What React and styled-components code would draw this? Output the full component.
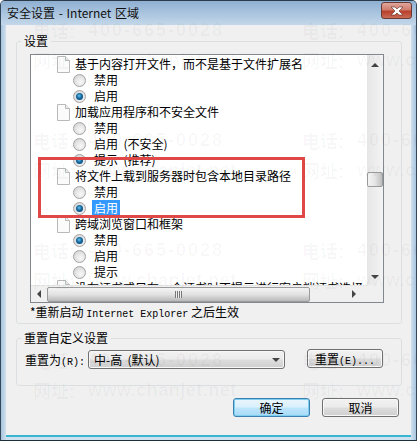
import React from "react";
import styled, { createGlobalStyle } from "styled-components";

const GlobalStyle = createGlobalStyle`
  html, body {
    margin: 0;
    padding: 0;
    background: #fff;
  }
  body {
    font-family: "Noto Sans CJK SC", "Liberation Sans", sans-serif;
    font-size: 12px;
    color: #000;
  }
`;

const settings = [
  { title: "基于内容打开文件，而不是基于文件扩展名", options: [{ label: "禁用" }, { label: "启用", checked: true }] },
  { title: "加载应用程序和不安全文件", options: [{ label: "禁用" }, { label: "启用  (不安全)" }, { label: "提示  (推荐)", checked: true }] },
  { title: "将文件上载到服务器时包含本地目录路径", options: [{ label: "禁用" }, { label: "启用", checked: true, selected: true }] },
  { title: "跨域浏览窗口和框架", options: [{ label: "禁用", checked: true }, { label: "启用" }, { label: "提示" }] },
  { title: "没有证书或只有一个证书时不提示进行客户端证书选择", options: [] },
];

const marks = [
  { label: "电话:", value: "400-665-0028", spacing: 2 },
  { label: "网址:", value: "www.chanjet.net", spacing: 0.5 },
];

export default function App() {
  return (
    <Window>
      <GlobalStyle />
      <TitleBar>
        <TitleText>安全设置 - Internet 区域</TitleText>
        <CloseButton>
          <svg width="16" height="10" viewBox="0 0 16 10">
            <path d="M2 1h4l2 2 2-2h4l-4 4 4 4h-4L8 7 6 9H2l4-4z" fill="#fff" stroke="#5a2a24" strokeWidth=".6" />
          </svg>
        </CloseButton>
      </TitleBar>
      <Client>
        <Group>
          <Legend>设置</Legend>
          <GroupBody>
            <ListBox>
              <Viewport>
                {settings.map((s) => (
                  <React.Fragment key={s.title}>
                    <HeadRow>
                      <DocIcon />
                      {s.title}
                    </HeadRow>
                    {s.options.map((o) => (
                      <OptionRow key={o.label}>
                        <Radio $checked={o.checked} />
                        <OptionLabel $selected={o.selected}>{o.label}</OptionLabel>
                      </OptionRow>
                    ))}
                  </React.Fragment>
                ))}
              </Viewport>
              <VScroll>
                <Arrow $dir="up" />
                <VTrack>
                  <VThumb />
                </VTrack>
                <Arrow $dir="down" />
              </VScroll>
              <HScroll>
                <Arrow $dir="left" />
                <HThumb>
                  <Grip />
                </HThumb>
                <Arrow $dir="right" />
              </HScroll>
              <Corner />
            </ListBox>
            <Note>
              *重新启动 <Mono>Internet Explorer</Mono> 之后生效
            </Note>
          </GroupBody>
        </Group>
        <ResetGroup>
          <Legend>重置自定义设置</Legend>
          <ResetRow>
            <ResetLabel>
              重置为<Mono>(R):</Mono>
            </ResetLabel>
            <Select>
              <SelectText>中-高  (默认)</SelectText>
              <Arrow $dir="down" $dark />
            </Select>
            <ResetButton>
              重置<Mono>(E)...</Mono>
            </ResetButton>
          </ResetRow>
        </ResetGroup>
        <Footer>
          <DialogButton $primary>确定</DialogButton>
          <DialogButton>取消</DialogButton>
        </Footer>
      </Client>
      <Highlight />
      <Watermark>
        {Array.from({ length: 8 }).map((_, i) =>
          [0, 1].map((col) => {
            const m = marks[i % 2];
            return (
              <Mark key={`${i}-${col}`}>
                <MarkLabel>{m.label}</MarkLabel>
                <span style={{ letterSpacing: m.spacing }}>{m.value}</span>
              </Mark>
            );
          }),
        )}
      </Watermark>
    </Window>
  );
}

function DocIcon() {
  return (
    <DocSvg width="13" height="17" viewBox="0 0 13 17">
      <path d="M.5.5h8l4 4v12H.5z" fill="#fbfbfb" stroke="#b9b9b9" />
      <path d="M8.5.5v4h4" fill="#eee" stroke="#b9b9b9" />
    </DocSvg>
  );
}

const Window = styled.div`
  position: relative;
  width: 417px;
  height: 441px;
  overflow: hidden;
  display: flex;
  flex-direction: column;
  box-sizing: border-box;
  border-top: 1px solid #2a3a48;
  border-left: 1px solid #33475a;
  border-right: 1px solid #33475a;
  border-bottom: 1px solid #1e2f3a;
  border-radius: 5px 5px 0 0;
  background: linear-gradient(90deg, #a9c4de 0, #cfe0ee 5px, #cfe0ee calc(100% - 5px), #a9c4de 100%);
`;

const TitleBar = styled.div`
  height: 24px;
  flex: none;
  display: flex;
  align-items: center;
  justify-content: space-between;
  padding: 0 4px 0 6px;
  background: linear-gradient(180deg, #8fb0d2 0, #a4c0dc 40%, #c3d7e9 100%);
`;

const TitleText = styled.div`
  font-size: 12px;
  line-height: 24px;
  color: #111;
  word-spacing: 1px;
`;

const CloseButton = styled.div`
  width: 31px;
  height: 17px;
  margin-top: -5px;
  display: flex;
  align-items: center;
  justify-content: center;
  box-sizing: border-box;
  border: 1px solid #6b3a34;
  border-radius: 3px;
  background: linear-gradient(180deg, #dfa79c 0, #d07c6c 45%, #b9402c 55%, #c96a55 100%);
`;

const Client = styled.div`
  flex: 1;
  margin: 0 5px 3px;
  padding: 9px 9px 0 10px;
  background: #f0f0f0;
  border-bottom: 2px solid #38b6cf;
`;

const Group = styled.fieldset`
  margin: 0;
  padding: 0;
  min-width: 0;
  border: 1px solid #dcdfe1;
  border-radius: 3px;
  height: 290px;
  box-sizing: border-box;
`;

const ResetGroup = styled(Group)`
  height: 55px;
  margin-top: 7px;
`;

const Legend = styled.legend`
  margin-left: 4px;
  padding: 0 3px;
  font-size: 12px;
  line-height: 14px;
`;

const GroupBody = styled.div`
  padding: 6px 17px 0 13px;
`;

const ListBox = styled.div`
  display: grid;
  grid-template-columns: 1fr 16px;
  grid-template-rows: 230px 17px;
  height: 249px;
  box-sizing: border-box;
  border: 1px solid #828790;
  background: #fff;
`;

const Viewport = styled.div`
  overflow: hidden;
  padding-top: 1px;
  white-space: pre;
`;

const HeadRow = styled.div`
  height: 16px;
  line-height: 16px;
  display: flex;
  align-items: center;
  gap: 5px;
  padding-left: 26px;
`;

const DocSvg = styled.svg`
  flex: none;
`;

const OptionRow = styled.div`
  height: 16px;
  line-height: 16px;
  display: flex;
  align-items: center;
  gap: 6px;
  padding-left: 42px;
`;

const Radio = styled.span`
  position: relative;
  flex: none;
  width: 13px;
  height: 13px;
  box-sizing: border-box;
  border-radius: 50%;
  border: 1px solid #a2a2a2;
  background: radial-gradient(circle at 60% 65%, #f8f8f8 0, #e0e0e0 60%, #c8c8c8 100%);
  &::after {
    content: "";
    display: ${(p) => (p.$checked ? "block" : "none")};
    position: absolute;
    left: 2px;
    top: 2px;
    width: 7px;
    height: 7px;
    border-radius: 50%;
    background: radial-gradient(circle at 45% 40%, #6fc0e8 0, #11679f 45%, #0b3f66 100%);
  }
`;

const OptionLabel = styled.span`
  padding: 0 2px;
  background: ${(p) => (p.$selected ? "#3399ff" : "transparent")};
  color: ${(p) => (p.$selected ? "#fff" : "#000")};
`;

const VScroll = styled.div`
  display: flex;
  flex-direction: column;
  align-items: center;
  background: linear-gradient(90deg, #e6e6e6, #f4f4f4);
`;

const VTrack = styled.div`
  flex: 1;
  width: 100%;
  padding-top: 105px;
  box-sizing: border-box;
`;

const VThumb = styled.div`
  height: 15px;
  box-sizing: border-box;
  border: 1px solid #9b9b9b;
  border-radius: 2px;
  background: linear-gradient(90deg, #f4f4f4, #e4e4e4 50%, #bdbdbd);
`;

const HScroll = styled.div`
  display: flex;
  align-items: center;
  background: #f0f0f0;
  border-top: 1px solid #e4e4e4;
`;

const HThumb = styled.div`
  width: 263px;
  height: 15px;
  margin: 0 auto 0 0;
  display: flex;
  align-items: center;
  justify-content: center;
  box-sizing: border-box;
  border: 1px solid #9b9b9b;
  border-radius: 2px;
  background: linear-gradient(180deg, #f4f4f4, #e2e2e2 50%, #b9b9b9);
`;

const Grip = styled.div`
  width: 7px;
  height: 7px;
  background: repeating-linear-gradient(90deg, #777 0 1px, #eee 1px 2px);
`;

const Corner = styled.div`
  background: #f0f0f0;
`;

// little triangles of the scrollbars and the dropdown
const arrowBorders = {
  up: "border-width: 0 4px 4px; border-color: transparent transparent #444;",
  down: "border-width: 4px 4px 0; border-color: #444 transparent transparent;",
  left: "border-width: 4px 4px 4px 0; border-color: transparent #444 transparent transparent;",
  right: "border-width: 4px 0 4px 4px; border-color: transparent transparent transparent #444;",
};

const Arrow = styled.span`
  flex: none;
  width: 0;
  height: 0;
  border-style: solid;
  ${(p) => arrowBorders[p.$dir]}
  margin: ${(p) =>
    p.$dir === "up"
      ? "8px 0 0"
      : p.$dir === "down"
        ? p.$dark
          ? "0"
          : "0 0 6px"
        : p.$dir === "left"
          ? "0 6px 0 6px"
          : "0 11px 0 0"};
`;

const Note = styled.div`
  margin-top: 1px;
  line-height: 16px;
`;

const Mono = styled.span`
  font-family: "Liberation Mono", monospace;
  font-size: 10px;
`;

const ResetRow = styled.div`
  display: flex;
  align-items: flex-start;
  padding: 5px 0 0 8px;
`;

const ResetLabel = styled.div`
  width: 63px;
  line-height: 19px;
`;

const buttonFace = `
  box-sizing: border-box;
  border: 1px solid #707070;
  border-radius: 3px;
  background: linear-gradient(180deg, #f2f2f2 0, #ebebeb 48%, #dddddd 52%, #cfcfcf 100%);
  box-shadow: inset 0 0 0 1px #f8f8f8;
  font: inherit;
  color: #000;
  padding: 0;
`;

const Select = styled.div`
  ${buttonFace}
  width: 197px;
  height: 19px;
  margin-right: 22px;
  padding: 0 4px 0 5px;
  display: flex;
  align-items: center;
  justify-content: space-between;
`;

const SelectText = styled.span`
  white-space: pre;
`;

const ResetButton = styled.button`
  ${buttonFace}
  width: 76px;
  height: 19px;
  margin-top: -1px;
  line-height: 17px;
`;

const Footer = styled.div`
  display: flex;
  justify-content: flex-end;
  gap: 12px;
  margin-top: 12px;
  padding-right: 3px;
`;

const DialogButton = styled.button`
  ${buttonFace}
  width: 77px;
  height: 19px;
  line-height: 17px;
  ${(p) =>
    p.$primary &&
    `
    border-color: #3c7fb1;
    background: linear-gradient(180deg, #eaf6fd 0, #d9f0fc 48%, #bee6fd 52%, #a7d9f5 100%);
    box-shadow: inset 0 0 0 1px #7fd0ee;
  `}
`;

const Highlight = styled.div`
  position: absolute;
  left: 37px;
  top: 156px;
  width: 267px;
  height: 61px;
  box-sizing: border-box;
  border: 3px solid #e04848;
  pointer-events: none;
`;

const Watermark = styled.div`
  position: absolute;
  inset: 0;
  pointer-events: none;
  display: grid;
  grid-template-columns: 269px 269px;
  grid-template-rows: repeat(4, 30px 80px);
  padding: 14px 0 0 32px;
  overflow: hidden;
  font-family: "Liberation Sans", "Noto Sans CJK SC", sans-serif;
  font-size: 18px;
  font-weight: 700;
  color: rgba(0, 0, 0, 0.032);
  white-space: nowrap;
`;

const Mark = styled.div`
  display: flex;
  align-items: center;
  height: 30px;
`;

const MarkLabel = styled.span`
  width: 55px;
  flex: none;
`;
